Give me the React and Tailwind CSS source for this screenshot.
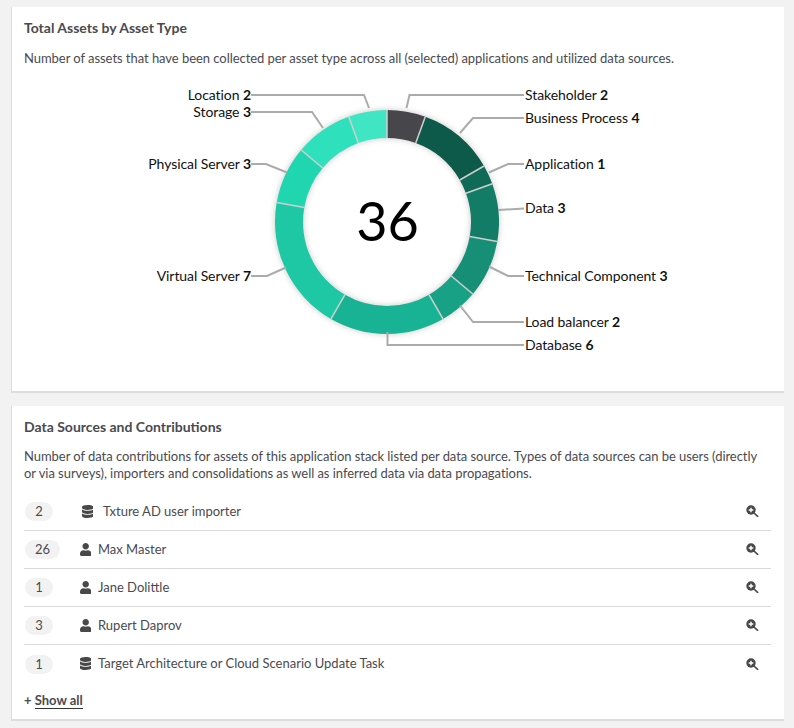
import { FaDatabase, FaUser } from "react-icons/fa";

const CX = 387;
const CY = 222;
const OUTER = 112;
const INNER = 84;

const SEGMENTS = [
  { label: "Stakeholder", count: 2, color: "#47464b", side: "right", points: "524,95 409.5,95 406.5,108", y: 95 },
  { label: "Business Process", count: 4, color: "#0d5a4a", side: "right", points: "524,118 473,118 460,133", y: 118 },
  { label: "Application", count: 1, color: "#0f6b58", side: "right", points: "524,164 508,164 489,172.5", y: 164 },
  { label: "Data", count: 3, color: "#137c67", side: "right", points: "524,208.5 499,210", y: 208 },
  { label: "Technical Component", count: 3, color: "#178e76", side: "right", points: "524,276 508,276 489,266.5", y: 276 },
  { label: "Load balancer", count: 2, color: "#19a186", side: "right", points: "524,322 473,322 460,305.5", y: 322 },
  { label: "Database", count: 6, color: "#18b394", side: "right", points: "524,345 387.5,345 387.5,332", y: 345 },
  { label: "Virtual Server", count: 7, color: "#1ec8a5", side: "left", points: "251,276 267,276 286,267.5", y: 276 },
  { label: "Physical Server", count: 3, color: "#20d6b0", side: "left", points: "251,164 266,164 287,172.5", y: 164 },
  { label: "Storage", count: 3, color: "#2fe0bc", side: "left", points: "251,112 312,112 323,128", y: 112 },
  { label: "Location", count: 2, color: "#40e6c3", side: "left", points: "251,95 364,95 369,108", y: 95 },
];

const SOURCES = [
  { count: 2, icon: "db", name: "Txture AD user importer", iconClass: "ml-[2px] mr-[9.6px]" },
  { count: 26, icon: "user", name: "Max Master", iconClass: "mr-[6.6px]" },
  { count: 1, icon: "user", name: "Jane Dolittle", iconClass: "mr-[6.6px]" },
  { count: 3, icon: "user", name: "Rupert Daprov", iconClass: "mr-[6.6px]" },
  { count: 1, icon: "db", name: "Target Architecture or Cloud Scenario Update Task", iconClass: "mr-[6.6px]" },
];

function polar(radius, angle) {
  const rad = ((angle - 90) * Math.PI) / 180;
  return [CX + radius * Math.cos(rad), CY + radius * Math.sin(rad)];
}

function arcPath(start, end) {
  const [x1, y1] = polar(OUTER, start);
  const [x2, y2] = polar(OUTER, end);
  const [x3, y3] = polar(INNER, end);
  const [x4, y4] = polar(INNER, start);
  const large = end - start > 180 ? 1 : 0;
  return `M${x1} ${y1}A${OUTER} ${OUTER} 0 ${large} 1 ${x2} ${y2}L${x3} ${y3}A${INNER} ${INNER} 0 ${large} 0 ${x4} ${y4}Z`;
}

function Donut() {
  let angle = 0;
  const arcs = SEGMENTS.map((s) => {
    const start = angle;
    angle += (s.count / 36) * 360;
    return { ...s, start, end: angle };
  });

  return (
    <svg width="772" height="300" viewBox="12 68 772 300" className="block">
      <g className="drop-shadow-[0_0_3px_rgba(0,0,0,0.22)]">
        {arcs.map((a) => (
          <path key={a.label} d={arcPath(a.start, a.end)} fill={a.color} />
        ))}
        {/* separators between slices only, the ring edge stays clean */}
        {arcs.map((a) => {
          const [x1, y1] = polar(INNER, a.start);
          const [x2, y2] = polar(OUTER, a.start);
          return <line key={a.label} x1={x1} y1={y1} x2={x2} y2={y2} stroke="#cfcfcf" strokeWidth="1.5" />;
        })}
      </g>
      {arcs.map((a) => (
        <polyline key={a.label} points={a.points} fill="none" stroke="#ababab" strokeWidth="2" />
      ))}
      {arcs.map((a) => (
        <text
          key={a.label}
          x={a.side === "right" ? 525 : 251}
          y={a.y + 5}
          textAnchor={a.side === "right" ? "start" : "end"}
          className="fill-[#111111] text-[14px] tracking-[-0.08px]"
        >
          {a.label} <tspan className="font-bold">{a.count}</tspan>
        </text>
      ))}
      <text x={CX + 0.5} y="241" textAnchor="middle" className="fill-black text-[54px]">
        36
      </text>
    </svg>
  );
}

function ZoomIcon() {
  return (
    <svg width="13" height="12" viewBox="0 0 13 12" className="mr-[12px] mb-px shrink-0">
      <path d="M8 8l3.6 3.4" stroke="#484848" strokeWidth="1.6" strokeLinecap="round" />
      <circle cx="5" cy="5" r="4.7" fill="#484848" />
      <path d="M5 2.7v4.6M2.7 5h4.6" stroke="#ffffff" strokeWidth="1.4" />
    </svg>
  );
}

function SourceRow({ source, last }) {
  const Icon = source.icon === "db" ? FaDatabase : FaUser;
  return (
    <div className={`flex h-[38px] items-center ${last ? "" : "border-b border-[#d9d9d9]"}`}>
      <div className="w-[56px] pl-px">
        <span className="block w-fit min-w-[28px] rounded-full bg-[#f2f2f2] px-[10px] text-center text-[13px] leading-[19px]">
          {source.count}
        </span>
      </div>
      <Icon className={`mb-px h-[13px] w-[11.4px] shrink-0 text-[#484848] ${source.iconClass}`} />
      <span className="flex-1 text-[13px]">{source.name}</span>
      <ZoomIcon />
    </div>
  );
}

export default function App() {
  return (
    <div className="h-[728px] overflow-hidden bg-[#f2f2f2] pt-[7px] pr-[10px] pl-[11px] font-['Lato',sans-serif] text-[#4a4a4f]">
      <section className="h-[386px] border-b-2 border-l border-[#dddddd] bg-white">
        <h2 className="pt-[12px] pl-[12px] text-[14px] leading-[18px] font-bold">Total Assets by Asset Type</h2>
        <p className="mt-[11px] pl-[12px] text-[13px] leading-[20px] tracking-[-0.05px]">
          Number of assets that have been collected per asset type across all (selected) applications and utilized data
          sources.
        </p>
        <Donut />
      </section>

      <section className="mt-[13px] h-[315px] border-b-2 border-l border-[#dddddd] bg-white pr-[13px] pl-[12px]">
        <h2 className="pt-[12px] text-[14px] leading-[18px] font-bold">Data Sources and Contributions</h2>
        <p className="mt-[12px] text-[13px] leading-[17px] tracking-[-0.05px]">
          Number of data contributions for assets of this application stack listed per data source. Types of data
          sources can be users (directly or via surveys), importers and consolidations as well as inferred data via data
          propagations.
        </p>
        <div className="mt-[11px]">
          {SOURCES.map((s, i) => (
            <SourceRow key={s.name} source={s} last={i === SOURCES.length - 1} />
          ))}
        </div>
        <div className="mt-[8px] text-[13px] leading-[18px] font-bold">
          + <span className="border-b border-[#333333] font-bold">Show all</span>
        </div>
      </section>
    </div>
  );
}
